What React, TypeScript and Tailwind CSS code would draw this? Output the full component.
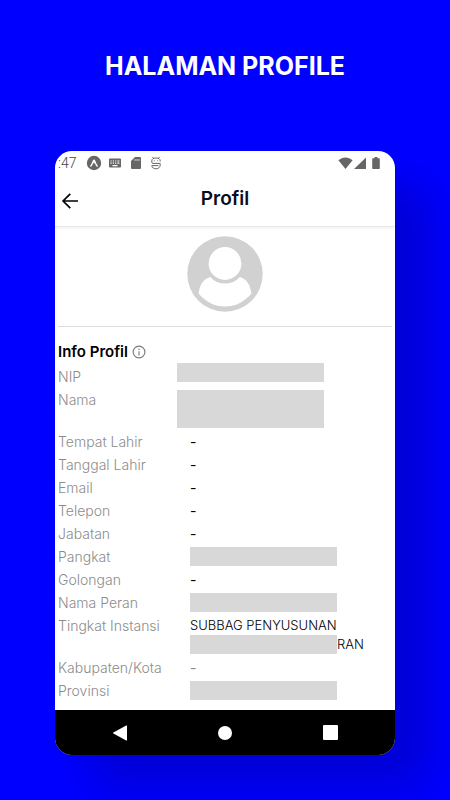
import type { ReactNode } from "react";

type Row = { label: string; value: ReactNode };

function Bar() {
  return <span className="block h-[19px] w-[147px] shrink-0 bg-[#d8d8d8]" />;
}

const rows: Row[] = [
  { label: "Tempat Lahir", value: "-" },
  { label: "Tanggal Lahir", value: "-" },
  { label: "Email", value: "-" },
  { label: "Telepon", value: "-" },
  { label: "Jabatan", value: "-" },
  { label: "Pangkat", value: <Bar /> },
  { label: "Golongan", value: "-" },
  { label: "Nama Peran", value: <Bar /> },
  {
    label: "Tingkat Instansi",
    value: (
      <span className="block text-[13px] leading-[19px] font-light">
        SUBBAG PENYUSUNAN
        <span className="flex">
          <Bar />
          RAN
        </span>
      </span>
    ),
  },
  { label: "Kabupaten/Kota", value: <span className="text-[#8c8c8c]">-</span> },
  { label: "Provinsi", value: <Bar /> },
];

function StatusBar() {
  return (
    <div className="flex h-6 items-center justify-between pr-[15px] pl-[3px] text-[#666]">
      <div className="flex items-center">
        <span className="w-7 font-[Roboto,sans-serif] text-sm font-light text-[#444]">:47</span>
        <svg className="size-4" viewBox="0 0 16 16" aria-hidden>
          <circle cx="8" cy="8" r="7.2" fill="currentColor" />
          <path
            d="M3.9 11.2C5.3 9.5 6.3 7 7 5.1c.4-.9 1.6-.9 2 0 .7 1.9 1.7 4.4 3.1 6.1-.8.9-1.6.3-2-.5C9.5 9.7 8.9 8.3 8 7.5c-.9.8-1.5 2.2-2.1 3.2-.4.8-1.2 1.4-2 .5Z"
            fill="#fff"
          />
        </svg>
        <svg className="ml-1.5 h-4 w-3.5" viewBox="0 0 14 16" aria-hidden>
          <rect x="1" y="3.5" width="12" height="9" rx="1" fill="currentColor" />
          <path
            d="M2.5 6h1.2M4.8 6H6M7.1 6h1.2M9.4 6h2M2.5 8.2h1.2M4.8 8.2H6M7.1 8.2h1.2M9.4 8.2h2M4.5 10.7h5"
            stroke="#fff"
            strokeWidth="1.2"
          />
        </svg>
        <svg className="ml-2 h-4 w-3" viewBox="0 0 12 16" aria-hidden>
          <path d="M5 2h5a1 1 0 0 1 1 1v10a1 1 0 0 1-1 1H2a1 1 0 0 1-1-1V6Z" fill="currentColor" />
          <path d="M5 4v2M7 4v2M9 4v2" stroke="#fff" strokeWidth="0.7" />
        </svg>
        <svg
          className="ml-2 h-4 w-3"
          viewBox="0 0 12 16"
          fill="none"
          stroke="currentColor"
          strokeLinecap="round"
          strokeLinejoin="round"
          aria-hidden
        >
          <path d="M2.6 2.2 3.6 3.4M9.4 2.200 8.4 3.4M10.200 6.200V5.800C10.200 4 8.500 3 6 3S1.800 4 1.800 5.800v1.400c0 .8.4 1.200 1.200 1.200h7.200v1.400c0 2.500-1.700 4-4.200 4s-4.200-1.500-4.200-3.200H8" />
          <path d="M4.300 5.700v.1M7.700 5.700v.1" strokeWidth="0.9" />
        </svg>
      </div>
      <div className="flex items-center">
        <svg className="h-4 w-[15px]" viewBox="0 0 15 16" fill="currentColor" aria-hidden>
          <path d="M7.5 14 .4 5.3C4.4 1.4 10.6 1.4 14.6 5.3Z" />
        </svg>
        <svg className="ml-px h-4 w-3" viewBox="0 0 12 16" fill="currentColor" aria-hidden>
          <path d="M12 2.5V14H0Z" />
        </svg>
        <svg className="ml-1.5 h-4 w-2" viewBox="0 0 8 16" fill="currentColor" aria-hidden>
          <path d="M2.5 2h3v1.2H7a.8.8 0 0 1 .8.8v9.2a.8.8 0 0 1-.8.8H1a.8.8 0 0 1-.8-.8V4A.8.8 0 0 1 1 3.2h1.5Z" />
        </svg>
      </div>
    </div>
  );
}

function Header() {
  return (
    <header className="grid h-[52px] grid-cols-[1fr_auto_1fr] items-center border-b border-[#e8e8e8] pb-1 shadow-[0_2px_2px_rgba(0,0,0,0.04)]">
      <button type="button" aria-label="Kembali" className="ml-1.5 justify-self-start pt-1">
        <svg
          className="h-5 w-[18px]"
          viewBox="0 0 18 20"
          fill="none"
          stroke="#000"
          strokeWidth="1.7"
          aria-hidden
        >
          <path d="M17 10H3M9.3 2.8 2.1 10l7.2 7.2" />
        </svg>
      </button>
      <h2 className="text-[19px] leading-6 font-semibold text-[#0b0b1a]">Profil</h2>
    </header>
  );
}

function Avatar() {
  return (
    <svg className="mx-auto size-[76px]" viewBox="0 0 76 76" role="img" aria-label="Foto profil">
      <circle cx="38" cy="38" r="37.7" fill="#d1d1d1" />
      <circle cx="38" cy="27.5" r="16.4" fill="#fff" />
      <path
        d="M23.3 40.9c-7.3 1.8-10.8 8.6-11.7 16.6C18.5 66 27.8 70.5 38 70.5S57.5 66 64.4 57.5c-.9-8-4.4-14.8-11.7-16.6C48.8 45.3 43.8 47.5 38 47.5s-10.8-2.2-14.7-6.6Z"
        fill="#fff"
      />
    </svg>
  );
}

function NavBar() {
  return (
    <nav className="flex h-[45px] items-center justify-around bg-black px-3 text-white">
      <button type="button" aria-label="Back">
        <svg className="size-4" viewBox="0 0 16 16" fill="currentColor" aria-hidden>
          <path d="M14.2.6a.5.5 0 0 1 .8.4v14a.5.5 0 0 1-.8.4L1.4 8.6a.7.7 0 0 1 0-1.2Z" />
        </svg>
      </button>
      <button type="button" aria-label="Home">
        <span className="block size-3.5 rounded-full bg-white" />
      </button>
      <button type="button" aria-label="Overview">
        <span className="block size-[15px] rounded-[1px] bg-white" />
      </button>
    </nav>
  );
}

export default function App() {
  return (
    <main className="min-h-screen bg-[#0000ff] px-[55px] pt-12 pb-11 font-[Inter,sans-serif]">
      <h1 className="text-center text-[25px] leading-9 font-bold text-white">HALAMAN PROFILE</h1>

      <div className="mt-[67px] overflow-hidden rounded-[17px] bg-white shadow-[35px_32px_40px_rgba(0,0,0,0.16)]">
        <StatusBar />
        <Header />

        <div className="mx-[3px] border-b border-[#dcdcdc] pt-[9px] pb-3.5">
          <Avatar />
        </div>

        <section className="px-[3px] pt-3.5 pb-2.5">
          <h3 className="flex items-center gap-1 text-[15px] leading-[22px] font-semibold text-black">
            Info Profil
            <svg
              className="size-3.5"
              viewBox="0 0 14 14"
              fill="none"
              stroke="#777"
              strokeWidth="1.1"
              aria-hidden
            >
              <circle cx="7" cy="7" r="5.9" />
              <path d="M7 6.2v4.2M7 3.6v1.3" />
            </svg>
          </h3>

          <dl className="flex flex-col gap-1 text-sm leading-[19px] text-black">
            <div className="flex h-[23px]">
              <dt className="w-[119px] self-end font-light text-[#8c8c8c]">NIP</dt>
              <dd>
                <Bar />
              </dd>
            </div>
            <div className="flex">
              <dt className="w-[119px] font-light text-[#8c8c8c]">Nama</dt>
              <dd className="h-[38px] w-[147px] bg-[#d8d8d8]" />
            </div>
            {rows.map((row) => (
              <div key={row.label} className="flex">
                <dt className="w-[132px] shrink-0 font-light text-[#8c8c8c]">{row.label}</dt>
                <dd>{row.value}</dd>
              </div>
            ))}
          </dl>
        </section>

        <NavBar />
      </div>
    </main>
  );
}
